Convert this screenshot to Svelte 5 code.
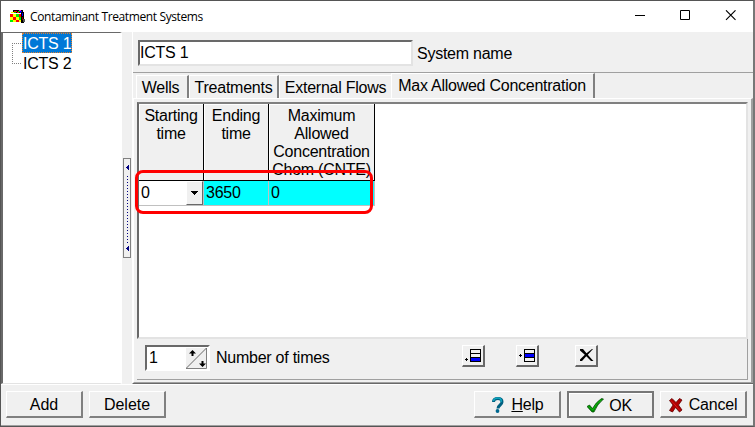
<script>
  const systems = ['ICTS 1', 'ICTS 2'];
  let selected = $state('ICTS 1');
  let name = $state('ICTS 1');
  const tabs = [
    { label: 'Wells', w: 53 },
    { label: 'Treatments', w: 90 },
    { label: 'External Flows', w: 112 },
    { label: 'Max Allowed Concentration', w: 204 }
  ];
  let active = $state(3);
  const logo = [
    ['#000', 3, 0, 10, 3], ['#f00', 4, 1, 3, 1], ['#0c0', 8, 1, 2, 1], ['#ff0', 1, 2, 3, 1], ['#f0f', 9, 0, 2, 1],
    ['#0c0', 4, 2, 2, 1], ['#f00', 7, 2, 2, 1], ['#00f', 10, 1, 2, 2], ['#000', 11, 2, 3, 11],
    ['#f00', 0, 4, 3, 3], ['#ff0', 3, 4, 3, 3], ['#0e0', 6, 4, 3, 3], ['#f00', 9, 4, 2, 3],
    ['#ff0', 0, 7, 3, 3], ['#f00', 3, 7, 3, 3], ['#ff0', 6, 7, 3, 3], ['#0e0', 9, 7, 2, 3],
    ['#0e0', 0, 10, 3, 2], ['#ff0', 3, 10, 3, 2], ['#f00', 6, 10, 3, 2], ['#ff0', 9, 10, 2, 2],
    ['#00f', 12, 3, 1, 3], ['#800000', 12, 7, 1, 3], ['#555', 13, 9, 2, 3]
  ];
</script>

<div class="window">
  <header>
    <svg class="logo" width="16" height="13" shape-rendering="crispEdges">
      {#each logo as [c, x, y, w, h]}<rect fill={c} {x} {y} width={w} height={h} />{/each}
    </svg>
    <span class="title">Contaminant Treatment Systems</span>
    <svg class="caption" width="102" height="12" fill="none" stroke="#000">
      <path d="M0 5.500H10" /><path d="M45.500 .5h9v9h-9z" /><path d="M91 .3l9.500 9.500M100.500 .3L91 9.800" stroke-width="1.1" />
    </svg>
  </header>

  <main>
    <nav class="tree">
      <svg width="18" height="35" stroke="#808080" stroke-dasharray="1 1" shape-rendering="crispEdges"><path d="M.5 0V20M0 .5H9M0 20.500H9" fill="none" /></svg>
      <div class="nodes">
        {#each systems as s}
          <button class="node" class:selected={s === selected} onclick={() => (selected = s)}>{s}</button>
        {/each}
      </div>
    </nav>

    <div class="splitter">
      <div class="grip">
        <svg width="6" height="98" fill="#000080" shape-rendering="crispEdges">
          <path d="M4 6h1v5H4zM3 7h1v3H3zM2 8h1v1H2zM4 87h1v5H4zM3 88h1v3H3zM2 89h1v1H2z" />
          <path d="M3.500 17V84" stroke="#000080" stroke-dasharray="1 2" />
        </svg>
      </div>
    </div>

    <section class="detail">
      <div class="namebar">
        <input id="system-name" bind:value={name} />
        <label for="system-name">System name</label>
      </div>
      <div class="tabs">
        {#each tabs as t, i}
          <button class="tab t{i}" class:active={i === active} style:width="{t.w}px" onclick={() => (active = i)}>{t.label}</button>
        {/each}
      </div>
      <div class="page">
        <div class="gridbox">
          <div class="grid">
            <div class="th">Starting<br />time</div>
            <div class="th">Ending<br />time</div>
            <div class="th">Maximum<br />Allowed<br />Concentration<br />Chom (CNTE)</div>
            <div class="td start">0<span class="drop"><svg width="7" height="4" shape-rendering="crispEdges"><path d="M0 0h7L3.500 4z" /></svg></span></div>
            <div class="td cyan">3650</div>
            <div class="td cyan">0</div>
          </div>
          <div class="mark"></div>
        </div>
        <div class="times">
          <div class="spin">
            <span>1</span>
            <svg width="21" height="21">
              <rect width="21" height="21" fill="#f0f0f0" />
              <path d="M0 20.500H20.500V0" stroke="#808080" fill="none" />
              <path d="M0 20.500L20.500 0" stroke="#696969" />
              <path d="M6.500 2L3 5.500H5.500V8H7.500V5.500H10zM16.500 19L13 15.500H15.500V13H17.500V15.500H20z" />
            </svg>
          </div>
          <span class="timeslabel">Number of times</span>
          <div class="tools">
            <button class="tool" aria-label="Add row"><svg width="16" height="14" shape-rendering="crispEdges"><path d="M0 10h3v1H0zM1 9h1v3H1z" /><path d="M5.500 .5h10v12h-10zM5 4.500H16M5 8.500H16" stroke="#000" fill="none" /><path fill="#00f" d="M6 9h9v3H6z" /></svg></button>
            <button class="tool" aria-label="Insert row"><svg width="16" height="14" shape-rendering="crispEdges"><path d="M0 6h3v1H0zM1 5h1v3H1z" /><path d="M5.500 .5h10v12h-10zM5 4.500H16M5 8.500H16" stroke="#000" fill="none" /><path fill="#00f" d="M6 5h9v3H6z" /></svg></button>
            <button class="tool del" aria-label="Delete row"><svg width="14" height="13"><path d="M0 0H3L6.500 4.200L12 0H13L7.800 5.700L12 10.500L13.500 12H11L6.300 7.200L2 12H0V10.500L4.800 5.800L0 1.500z" /></svg></button>
          </div>
        </div>
      </div>
    </section>
  </main>

  <footer>
    <button class="btn add">Add</button>
    <button class="btn delete">Delete</button>
    <span class="space"></span>
    <button class="btn help">
      <svg width="12" height="16"><path d="M1.500 5C1.500 1.500 4 1.500 6 1.500C9 1.500 10 3 10 5C10 8 6 8 6 11.500" fill="none" stroke="#006080" stroke-width="3" /><path d="M1.500 4C2 1.500 4 1 6 1C9 1 9.500 3 9 5" fill="none" stroke="#10a8c0" stroke-width="1.500" /><circle cx="5.500" cy="14" r="1.900" fill="#006890" /></svg>
      <span><u>H</u>elp</span>
    </button>
    <button class="btn ok">
      <svg width="17" height="15"><path d="M0 8.500L2.500 7L5.500 10.500Q9 4 14.500 .5L16.500 1Q10 6.500 7 14H5Z" fill="#008a00" stroke="#004800" stroke-width=".7" /><path d="M1.500 8.500L5.800 12Q9 5.500 14 1.800" fill="none" stroke="#10c010" stroke-width=".9" /></svg>
      <span>OK</span>
    </button>
    <button class="btn cancel">
      <svg width="14" height="15"><path d="M.5 2.500L3 .5L7 4.500L10.500 .5L13 2L9.500 7L13 12L10.500 14L6.500 9.500L3.500 14L.5 12.500L4 7Z" fill="#b00000" stroke="#600000" stroke-width=".8" /><path d="M2 2.500L11 12.500" stroke="#e02020" stroke-width=".8" /></svg>
      <span>Cancel</span>
    </button>
  </footer>
</div>

<style>
  :global(body) { background: #505050; overflow: hidden; }
  * { box-sizing: border-box; }
  button, input { font: inherit; color: inherit; letter-spacing: inherit; border-radius: 0; margin: 0; padding: 0; outline: 0; }
  svg { display: block; flex: none; }
  .window { width: 755px; height: 427px; display: flex; flex-direction: column; background: #f0f0f0; border: solid #555; border-width: 1px 2px 1px 1px; border-right-color: #777; font: 16px/18px "Liberation Sans", Arial, sans-serif; color: #000; letter-spacing: -.25px; }
  header { height: 31px; flex: none; background: #fff; display: flex; align-items: center; padding: 0 16px 0 9px; }
  .title { font: 12px/16px "Open Sans", "Noto Sans", sans-serif; letter-spacing: -.38px; margin: 0 auto 0 4px; }
  .caption { margin-top: -1px; }
  main { height: 352px; flex: none; display: flex; }
  .tree { width: 121px; border: solid; border-width: 1px 2px 1px 2px; border-color: #696969 #fff #e3e3e3 #696969; background: #fff; display: flex; }
  .tree svg { margin: 10px 0 0 9px; width: 10px; }
  .nodes { display: flex; flex-direction: column; align-items: flex-start; }
  .node { height: 20px; border: 0; background: none; padding: 1px 1px 0 1px; line-height: 20px; }
  .selected { background: #0078d7; color: #fff; outline: 1px dotted #e08030; outline-offset: -1px; }
  .splitter { width: 10px; display: flex; align-items: center; padding-left: 1px; }
  .grip { width: 8px; height: 100px; border: 1px solid #808080; }
  .detail { flex: 1; display: flex; flex-direction: column; border-left: 1px solid #fff; border-bottom: 1px solid #696969; }
  .namebar { height: 41px; border-bottom: 1px solid #a0a0a0; display: flex; padding: 8px 0 0 5px; align-items: flex-start; }
  input { width: 275px; height: 26px; background: #fff; border: solid; border-width: 2px; border-color: #696969 #e3e3e3 #e3e3e3 #696969; padding: 0; }
  label { margin: 5px 0 0 4px; }
  .tabs { height: 25px; display: flex; align-items: flex-end; padding-left: 3px; }
  .tab { height: 23px; flex: none; background: #f0f0f0; border: solid; border-width: 1px 2px 0 1px; border-color: #fff #808080 #fff #fff; white-space: nowrap; padding-top: 1px; }
  .t0 { padding-right: 3px; }
  .t2 { border-right-width: 0; }
  .t3 { padding-right: 1px; }
  .tab.active { height: 25px; padding-bottom: 2px; }
  .page { flex: 1; border: solid; border-width: 1px 2px 1px 1px; border-color: #fff #a0a0a0 #a0a0a0 #fff; padding: 3px 3px 2px 3px; display: flex; flex-direction: column; }
  .gridbox { height: 237px; background: #fff; border: 2px solid; border-color: #808080 #e3e3e3 #e3e3e3 #696969; position: relative; }
  .grid { display: grid; grid-template-columns: 65px 65px 106px; grid-template-rows: 77px 25px; width: 236px; }
  .th { background: #f0f0f0; border: 1px solid #000; border-width: 0 1px 1px 0; box-shadow: inset 1px 1px #fff; text-align: center; padding-top: 3px; overflow: hidden; }
  .td { border: 1px solid #c0c0c0; border-width: 0 1px 1px 0; padding: 3px 0 0 2px; }
  .start { display: flex; justify-content: space-between; padding: 0 0 0 2px; line-height: 24px; }
  .cyan { background: #0ff; }
  .drop { width: 17px; height: 24px; background: #f0f0f0; border: 1px solid; border-color: #fff #696969 #696969 #fff; display: flex; align-items: center; justify-content: center; }
  .mark { position: absolute; left: -4px; top: 66px; width: 238px; height: 44px; border: 3px solid #f00; border-radius: 8px; }
  .times { flex: 1; border: solid #a0a0a0; border-width: 0 1px 1px 0; display: flex; padding: 6px 0 0 8px; }
  .spin { width: 65px; height: 26px; border: 2px solid; border-color: #696969 #fff #fff #696969; background: #fff; display: flex; justify-content: space-between; padding: 1px 1px 0 2px; line-height: 20px; }
  .timeslabel { margin: 4px 0 0 6px; width: 115px; white-space: nowrap; }
  .tools { display: flex; margin-left: 131px; }
  .tool { width: 23px; height: 22px; margin-right: 31px; background: #f0f0f0; border: solid; border-width: 1px 2px 2px 1px; border-color: #fff #696969 #696969 #fff; display: flex; align-items: center; justify-content: center; }
  .del { margin-left: 5px; padding-left: 2px; }
  footer { flex: 1; border-top: 1px solid #fff; border-bottom: 1px solid #a0a0a0; display: flex; padding: 6px 6px 0 5px; }
  .btn { width: 77px; height: 27px; flex: none; background: #f0f0f0; border: solid; border-width: 1px 2px 2px 1px; border-color: #fff #808080 #808080 #fff; display: flex; align-items: center; justify-content: center; margin-right: 6px; gap: 6px; padding-top: 1px; letter-spacing: 0; }
  .space { flex: 1; }
  .help, .ok, .cancel { width: 87px; padding-top: 2px; letter-spacing: -.2px; }
  .help { gap: 7px; padding-left: 2px; }
  .ok { border: 2px solid #777; box-shadow: inset 1px 1px #fff; gap: 5px; padding-right: 2px; }
  .cancel { margin-right: 0; }
</style>
